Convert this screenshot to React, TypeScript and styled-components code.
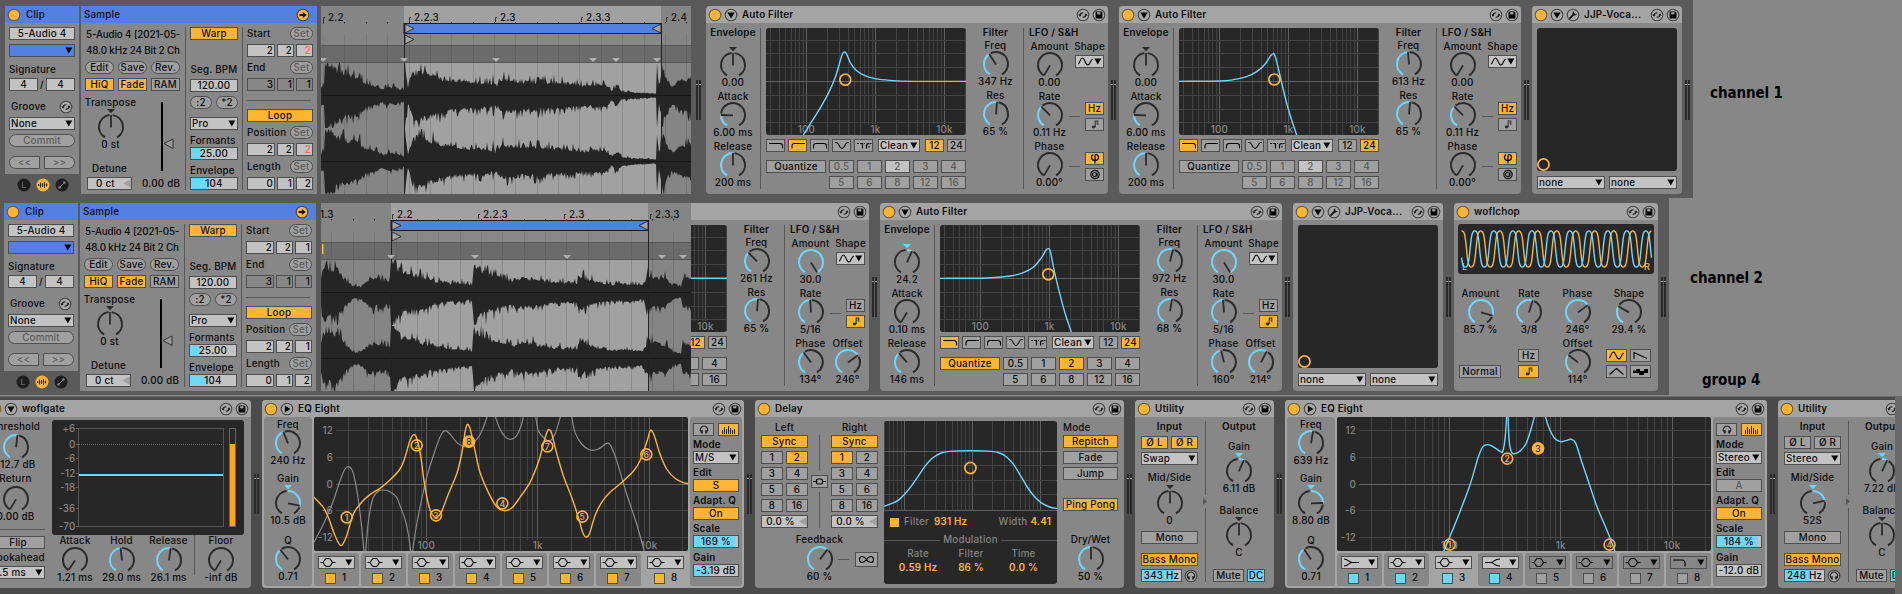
import React from "react";
import styled, { createGlobalStyle, css } from "styled-components";

const C = {
  panel: "#878787",
  head: "#a4a4a4",
  field: "#c3c3c3",
  btn: "#a0a0a0",
  line: "#4f4f4f",
  ink: "#0c0c0c",
  dim: "#5c5c5c",
  blue: "#5480e4",
  orange: "#ffb532",
  cyan: "#6dd7ff",
  dark: "#272727",
  mute: "#848484",
};

const Global = createGlobalStyle`
  body { margin: 0; background: #878787; }
  * { box-sizing: border-box; }
  svg { display: block; flex: none; }
  svg text { font-family: Inter, "Liberation Sans", sans-serif; font-weight: 500; letter-spacing: 0.2px; }
`;

const Page = styled.div`
  width: 1902px;
  height: 594px;
  overflow: hidden;
  background: #878787;
  color: ${C.ink};
  font: 500 9.8px/12px Inter, "Liberation Sans", sans-serif;
  letter-spacing: 0.22px;
  white-space: nowrap;
`;

const Track = styled.div`
  display: flex;
  height: 198px;
`;
const Strip = styled.div<{ $w: number; $left: number; $top: number; $deep?: boolean; $h?: number }>`
  display: flex;
  width: ${(p) => p.$w}px;
  height: ${(p) => p.$h ?? 197}px;
  padding: ${(p) => p.$top}px 0 0 ${(p) => p.$left}px;
  background: ${(p) => (p.$deep ? "#4b4b4b" : "#5a5a5a")};
  overflow: hidden;
  flex: none;
`;
const TrackName = styled.div<{ $x: number; $y: number }>`
  padding: ${(p) => p.$y}px 0 0 ${(p) => p.$x}px;
  font: bold 15px/20px "DejaVu Sans Condensed", "DejaVu Sans", sans-serif;
  font-stretch: condensed;
  letter-spacing: -0.1px;
  color: #000;
`;
const Chain = styled.div<{ $shift?: number; $w?: number }>`
  display: flex;
  width: ${(p) => (p.$w ? p.$w + "px" : "auto")};
  overflow: hidden;
  flex: none;
  & > :first-child { margin-left: ${(p) => p.$shift ?? 0}px; }
`;

const Row = styled.div<{ $mt?: number; $gap?: number; $h?: number; $just?: string; $ml?: number; $align?: string; $w?: number; $color?: string }>`
  display: flex;
  align-items: ${(p) => p.$align ?? "center"};
  justify-content: ${(p) => p.$just ?? "flex-start"};
  gap: ${(p) => p.$gap ?? 0}px;
  margin-top: ${(p) => p.$mt ?? 0}px;
  margin-left: ${(p) => p.$ml ?? 0}px;
  height: ${(p) => (p.$h ? p.$h + "px" : "auto")};
  width: ${(p) => (p.$w ? p.$w + "px" : "auto")};
  color: ${(p) => p.$color ?? "inherit"};
  flex: none;
`;
const Col = styled.div<{ $w?: number; $mt?: number; $ml?: number; $gap?: number; $align?: string }>`
  display: flex;
  flex-direction: column;
  flex: none;
  align-items: ${(p) => p.$align ?? "stretch"};
  gap: ${(p) => p.$gap ?? 0}px;
  width: ${(p) => (p.$w ? p.$w + "px" : "auto")};
  margin-top: ${(p) => p.$mt ?? 0}px;
  margin-left: ${(p) => p.$ml ?? 0}px;
`;
const Label = styled.div<{ $mt?: number; $c?: boolean; $b?: boolean; $ml?: number; $color?: string }>`
  height: 12px;
  flex: none;
  margin-top: ${(p) => p.$mt ?? 0}px;
  margin-left: ${(p) => p.$ml ?? 0}px;
  color: ${(p) => p.$color ?? "inherit"};
  ${(p) => p.$c && css`display: flex; justify-content: center;`}
  ${(p) => p.$b && css`font-weight: 600;`}
`;
const Button = styled.div<{ $w?: number; $on?: boolean | string; $dim?: boolean; $mt?: number; $ml?: number; $pill?: string; $h?: number; $bg?: string }>`
  display: flex;
  flex: none;
  align-items: center;
  justify-content: center;
  height: ${(p) => p.$h ?? 13}px;
  width: ${(p) => (p.$w ? p.$w + "px" : "auto")};
  margin-top: ${(p) => p.$mt ?? 0}px;
  margin-left: ${(p) => p.$ml ?? 0}px;
  border: 1px solid ${C.line};
  border-radius: ${(p) => p.$pill ?? "0"};
  line-height: 11px;
  background: ${(p) => p.$bg ?? (p.$on ? C.orange : C.btn)};
  color: ${(p) => (p.$dim ? C.dim : C.ink)};
`;
const Field = styled(Button)<{ $fill?: number; $right?: boolean; $left?: boolean; $red?: boolean; $off?: boolean }>`
  background: ${(p) =>
    p.$off
      ? C.panel
      : p.$fill
        ? `linear-gradient(90deg, ${C.cyan} ${p.$fill}%, ${C.field} ${p.$fill}%)`
        : C.field};
  ${(p) => p.$right && css`justify-content: flex-end; padding-right: 1px;`}
  ${(p) => p.$left && css`justify-content: flex-start; padding-left: 1px;`}
  ${(p) => p.$red && css`color: #ff6a5a;`}
`;
const SelectBox = styled(Button)<{ $tint?: string; $pad?: number }>`
  justify-content: space-between;
  padding: 0 1px 0 ${(p) => p.$pad ?? 1}px;
  background: ${(p) => p.$tint ?? C.field};
`;
const VLine = styled.div<{ $h: number; $mt?: number; $ml?: number }>`
  width: 1px;
  flex: none;
  height: ${(p) => p.$h}px;
  margin-top: ${(p) => p.$mt ?? 0}px;
  margin-left: ${(p) => p.$ml ?? 0}px;
  background: #575757;
`;
const HLine = styled.div<{ $w: number; $mt?: number }>`
  height: 1px;
  flex: none;
  width: ${(p) => p.$w}px;
  margin-top: ${(p) => p.$mt ?? 0}px;
  background: #575757;
`;
const Spring = styled.div`
  flex: 1;
`;

const Down = () => (
  <svg width="8" height="7" viewBox="0 0 8 7"><path d="M0.3 0.6H7.3L3.8 6.4Z" fill="#000" /></svg>
);
const Select = (p: { w?: number; mt?: number; ml?: number; tint?: string; pad?: number; children?: React.ReactNode }) => (
  <SelectBox $w={p.w} $mt={p.mt} $ml={p.ml} $tint={p.tint} $pad={p.pad}>
    <span>{p.children}</span>
    <Down />
  </SelectBox>
);

/* Round header icons */
const Round = (p: { fill?: string; stroke?: string; children?: React.ReactNode }) => (
  <svg width="14" height="14" viewBox="0 0 14 14">
    <circle cx="7" cy="7" r="5.8" fill={p.fill ?? "#a9a9a9"} stroke={p.stroke ?? "#434343"} strokeWidth="1.1" />
    {p.children}
  </svg>
);
const Power = () => <Round fill={C.orange} stroke="#6b5a3c" />;
const Fold = ({ right }: { right?: boolean }) => (
  <Round>{right ? <path d="M4.9 3.4V10.6L10.4 7Z" fill="#000" /> : <path d="M3.3 4.4H10.7L7 10.6Z" fill="#000" />}</Round>
);
const Wrench = () => (
  <Round>
    <path d="M4 10.2L7.5 6.6" stroke="#111" strokeWidth="1.8" strokeLinecap="round" />
    <path d="M8.4 3.2A2.2 2.2 0 1 0 10.8 5.8L9.3 6.2L8 4.8Z" fill="#111" />
  </Round>
);
const Swap = () => (
  <Round>
    <path d="M4 7.2C4 5.4 5 4.7 7.4 4.7M10 6.8C10 8.6 9 9.3 6.6 9.3" fill="none" stroke="#111" strokeWidth="1.1" />
    <path d="M2.3 6.6H5.7L4 8.7ZM8.3 7.4H11.7L10 5.3Z" fill="#111" />
  </Round>
);
const Save = () => (
  <Round>
    <path d="M3.6 3.6H9.4L10.4 4.6V10.4H3.6Z" fill="#000" />
    <rect x="5.2" y="4.2" width="3.2" height="2.2" fill="#a9a9a9" />
  </Round>
);
const ArrowRight = () => (
  <Round fill={C.orange}>
    <path d="M3.6 6.1H6.8V3.9L10.8 7L6.8 10.1V7.9H3.6Z" fill="#111" />
  </Round>
);
const Phones = ({ round }: { round?: boolean }) => {
  const shape = (
    <>
      <path d="M4.4 9.3A3.6 3.6 0 1 1 9.6 9.3" fill="none" stroke="#222" strokeWidth="1.1" />
      <rect x="3.9" y="7.3" width="1.9" height="3.2" fill="#222" />
      <rect x="8.2" y="7.3" width="1.9" height="3.2" fill="#222" />
    </>
  );
  return round ? <Round>{shape}</Round> : <svg width="14" height="14" viewBox="0 0 14 14">{shape}</svg>;
};

/* Knobs */
const arc = (a: number, b: number, r = 12) => {
  const p = (d: number) => {
    const t = (d * Math.PI) / 180;
    return `${(r * Math.sin(t)).toFixed(2)} ${(-r * Math.cos(t)).toFixed(2)}`;
  };
  return `M${p(a)}A${r} ${r} 0 ${b - a > 180 ? 1 : 0} 1 ${p(b)}`;
};
const Dial = ({ a, bi, tri }: { a: number; bi?: boolean; tri?: boolean }) => {
  const t = (a * Math.PI) / 180;
  const lit = bi ? (a > 4 ? [0, a] : null) : a > -146 ? [-150, a - 3] : null;
  const triCol = bi && a !== 0 ? C.cyan : "#2b2b2b";
  return (
    <svg width="28" height="24" viewBox="-14 -12 28 24" overflow="visible">
      {bi && a - 8 > -150 && <path d={arc(-150, Math.min(a, 0) - 7)} fill="none" stroke="#2b2b2b" strokeWidth="2" />}
      {a + 8 < 150 && <path d={arc(a + (a < -140 ? 0 : 8), 150)} fill="none" stroke="#2b2b2b" strokeWidth="2" />}
      {lit && <path d={arc(lit[0], lit[1])} fill="none" stroke={C.cyan} strokeWidth="2" />}
      <path d={`M0 0.4L${12 * Math.sin(t)} ${-12 * Math.cos(t)}`} stroke="#2b2b2b" strokeWidth="1.8" />
      {tri && <path d="M-4 -18H4L0 -13.8Z" fill={triCol} />}
    </svg>
  );
};
const KnobBox = styled(Col)`
  & > svg { align-self: center; }
`;
const Knob = (p: { label?: string; value: string; a: number; w?: number; mt?: number; ml?: number; gap?: number; bi?: boolean; bold?: boolean }) => (
  <KnobBox $w={p.w} $mt={p.mt} $ml={p.ml}>
    <Label $c $b={p.bold}>{p.label}</Label>
    <Col $mt={p.gap ?? 0} $align="center"><Dial a={p.a} bi={p.bi} tri={p.bi} /></Col>
    <Label $c>{p.value}</Label>
  </KnobBox>
);

/* Device frame */
const Frame = styled.div<{ $w: number; $bg?: string }>`
  width: ${(p) => p.$w}px;
  height: 188px;
  flex: none;
  overflow: hidden;
  border-radius: 4px;
  background: ${(p) => p.$bg ?? C.panel};
`;
const Head = styled.div<{ $bg?: string }>`
  display: flex;
  align-items: center;
  gap: 2px;
  height: 17px;
  padding: 0 2px;
  background: ${(p) => p.$bg ?? C.head};
`;
const Title = styled.div<{ $ml?: number; $b?: boolean }>`
  margin-left: ${(p) => p.$ml ?? 2}px;
  font-weight: ${(p) => (p.$b === false ? 500 : 600)};
  flex: 1;
`;
const Body = styled.div`
  display: flex;
  align-items: flex-start;
`;
const Device = (p: { w: number; title: string; icons?: React.ReactNode; bg?: string; children: React.ReactNode }) => (
  <Frame $w={p.w} $bg={p.bg}>
    <Head>
      <Power />
      {p.icons}
      <Title>{p.title}</Title>
      <Swap />
      <Save />
    </Head>
    <Body>{p.children}</Body>
  </Frame>
);

const MeterBox = styled.div<{ $l?: number; $r?: number }>`
  display: flex;
  flex: none;
  gap: 1px;
  height: 40px;
  margin: 74px ${(p) => p.$r ?? 3}px 0 ${(p) => p.$l ?? 3}px;
  & > i {
    width: 2px;
    background: linear-gradient(#2a2a2a 4px, #9a9a9a 4px, #9a9a9a 5px, #2a2a2a 5px);
  }
`;
const Meter = (p: { l?: number; r?: number }) => (
  <MeterBox $l={p.l} $r={p.r}><i /><i /></MeterBox>
);

/* Curves */
type P = [number, number];
const smooth = (pts: P[]) => {
  let d = `M${pts[0][0].toFixed(2)} ${pts[0][1].toFixed(2)}`;
  for (let i = 0; i < pts.length - 1; i++) {
    const a = pts[i - 1] ?? pts[i], b = pts[i], c = pts[i + 1], e = pts[i + 2] ?? c;
    const k = 6;
    d += `C${(b[0] + (c[0] - a[0]) / k).toFixed(2)} ${(b[1] + (c[1] - a[1]) / k).toFixed(2)} ${(c[0] - (e[0] - b[0]) / k).toFixed(2)} ${(c[1] - (e[1] - b[1]) / k).toFixed(2)} ${c[0].toFixed(2)} ${c[1].toFixed(2)}`;
  }
  return d;
};
const scaled = (s: string, ox: number, oy: number, sx = 3, sy = 3): P[] =>
  s.trim().split(" ").map((q) => {
    const [x, y] = q.split(",").map(Number);
    return [(x - ox) / sx, (y - oy) / sy];
  });

const Screen = styled.div<{ $w: number; $h: number; $mt?: number; $ml?: number; $r?: number }>`
  width: ${(p) => p.$w}px;
  height: ${(p) => p.$h}px;
  flex: none;
  margin-top: ${(p) => p.$mt ?? 0}px;
  margin-left: ${(p) => p.$ml ?? 0}px;
  border-radius: ${(p) => p.$r ?? 3}px;
  background: ${C.dark};
  overflow: hidden;
`;

const logLines = (x100: number, dec: number, w: number, min = 0) => {
  const out: { x: number; major: boolean }[] = [];
  for (let d = -1; d < 3; d++)
    for (let m = 1; m < 10; m++) {
      const x = x100 + dec * (d + Math.log10(m));
      if (x > min && x < w) out.push({ x, major: m === 1 });
    }
  return out;
};

/* Auto Filter */
const FILTER_ICONS = [
  "M1 3.5H12Q14.5 3.5 14.5 6V8.5",
  "M2 8.5V6Q2 3.5 4.5 3.5H15",
  "M1.5 8.5V6Q1.5 3.5 4 3.5H12Q14.5 3.5 14.5 6V8.5",
  "M1 2.5H2.5C5 2.5 5 8.5 8 8.5C11 8.5 11 2.5 13.5 2.5H15",
];
const FilterGlyph = ({ i }: { i: number }) => (
  <svg width="16" height="11" viewBox="0 0 16 11" fill="none" stroke="#000" strokeWidth="1.1">
    {i < 4 ? (
      <path d={FILTER_ICONS[i]} />
    ) : (
      <>
        <path d="M1 3.5H3M4 3.5H6.5V8.5M10.5 8.5V6Q10.5 3.5 12.5 3.5H13" />
        <path d="M13 3V9M8 3.5H9M14 3.5H16" strokeDasharray="1.5 1.5" />
      </>
    )}
  </svg>
);
const Note = () => (
  <svg width="12" height="11" viewBox="0 0 12 11">
    <ellipse cx="4.6" cy="8" rx="1.9" ry="1.4" fill="#333" />
    <path d="M6.2 8V2H8.8V6" stroke="#333" strokeWidth="1.1" fill="none" />
    <path d="M6.2 4H8.4" stroke="#555" strokeWidth="1" />
  </svg>
);
const Sine = () => (
  <svg width="17" height="11" viewBox="0 0 17 11">
    <path d="M1 8C3 8 3 2 5.3 2C8 2 8.2 9 11 9C13.3 9 13.3 3 16 3" fill="none" stroke="#000" strokeWidth="1.1" />
  </svg>
);
const Phi = () => (
  <svg width="12" height="11" viewBox="0 0 12 11" fill="none" stroke="#111" strokeWidth="1.3">
    <path d="M4.3 1.6C1.6 2.6 1.8 7.6 6 7.6C10.2 7.6 10.4 2.6 7.7 1.6C6.6 1.3 6 1.8 6 3V10.5" />
  </svg>
);
const Spin = () => (
  <svg width="12" height="11" viewBox="0 0 12 11" fill="none" stroke="#111" strokeWidth="1.2">
    <circle cx="6" cy="5.5" r="4.2" /><circle cx="5.5" cy="5.5" r="2" /><path d="M8 3.5V7.5" />
  </svg>
);
const Dash = ({ w = 11 }: { w?: number }) => <HLine $w={w} />;

const FilterScreen = ({ curve, node }: { curve: P[]; node?: P }) => (
  <svg width="200" height="107" viewBox="0 0 200 107">
    {logLines(40.5, 69, 200).map((l, i) => {
      const near = [40.5, 109.5, 178.5].some((c) => Math.abs(c - l.x) < 12);
      return <path key={i} d={`M${Math.floor(l.x) + 0.5} 0V${near ? 96 : 107}`} stroke={l.major ? "#5f5f5f" : "#424242"} />;
    })}
    {[12.5, 25.5, 39.5, 53.5, 67.5, 81.5, 94.5].map((y) => (
      <path key={y} d={`M0 ${y}H200`} stroke={y === 53.5 ? "#5f5f5f" : "#424242"} />
    ))}
    {["100", "1k", "10k"].map((t, i) => (
      <text key={t} x={40.5 + i * 69} y="104.5" fontSize="9.8" textAnchor="middle" fill={C.mute}>{t}</text>
    ))}
    <path d={smooth(curve)} fill="none" stroke={C.cyan} strokeWidth="1.4" />
    {node && <circle cx={node[0]} cy={node[1]} r="5.5" fill="none" stroke={C.orange} strokeWidth="1.7" />}
  </svg>
);

interface AFProps {
  env: [string, number];
  attack: [string, number];
  release: [string, number];
  curve: P[];
  node?: P;
  type: number;
  slope: number;
  quant: boolean;
  freq: [string, number];
  res: [string, number];
  amount: [string, number];
  rate: [string, number];
  phase: [string, number];
  offset?: [string, number];
}
const AutoFilter = (p: AFProps) => {
  const beat = (t: string, ml = 0) => (
    <Button key={t} $w={25} $ml={ml} $dim={!p.quant} $bg={t === "2" ? (p.quant ? C.orange : "#c3c3c3") : undefined}>{t}</Button>
  );
  return (
    <Device w={402} title="Auto Filter" icons={<Fold />}>
      <Col $w={54} $mt={4} $ml={0}>
        <Label $c $b>Envelope</Label>
        <Knob mt={2} value={p.env[0]} a={p.env[1]} bi />
        <Knob mt={2} label="Attack" value={p.attack[0]} a={p.attack[1]} />
        <Knob mt={2} label="Release" value={p.release[0]} a={p.release[1]} />
      </Col>
      <VLine $h={161} $mt={5} />
      <Col $w={200} $ml={5}>
        <Screen $w={200} $h={107} $mt={5}><FilterScreen curve={p.curve} node={p.node} /></Screen>
        <Row $mt={4} $gap={3}>
          {[0, 1, 2, 3, 4].map((i) => (
            <Button key={i} $w={19} $on={i === p.type}><FilterGlyph i={i} /></Button>
          ))}
          <Select w={42} ml={2}>Clean</Select>
          <Button $w={19} $ml={2} $on={p.slope === 12}>12</Button>
          <Button $w={19} $on={p.slope === 24}>24</Button>
        </Row>
        <Row $mt={8} $gap={3}>
          <Button $w={60} $on={p.quant}>Quantize</Button>
          {["0.5", "1", "2", "3", "4"].map((t) => beat(t))}
        </Row>
        <Row $mt={3} $gap={3} $just="flex-end">{["5", "6", "8", "12", "16"].map((t) => beat(t))}</Row>
      </Col>
      <Col $w={57} $ml={1} $mt={4}>
        <Label $c $b>Filter</Label>
        <Knob mt={1} label="Freq" value={p.freq[0]} a={p.freq[1]} />
        <Knob mt={2} label="Res" value={p.res[0]} a={p.res[1]} />
      </Col>
      <VLine $h={161} $mt={5} $ml={-1} />
      <Col $mt={4}>
        <Label $b $ml={5}>LFO / S&amp;H</Label>
        <Row $mt={2} $align="flex-start">
          <Col $w={51}>
            <Knob label="Amount" value={p.amount[0]} a={p.amount[1]} />
            <Knob mt={2} label="Rate" value={p.rate[0]} a={p.rate[1]} />
            <Knob mt={2} label="Phase" value={p.phase[0]} a={p.phase[1]} />
          </Col>
          <Col $w={29}>
            <Label $c>Shape</Label>
            <SelectBox $w={29} $mt={2}><Sine /><Down /></SelectBox>
            <Row $mt={34} $ml={-6} $w={35} $just="space-between">
              <Dash />
              <Col $gap={3}>
                <Button $w={19} $on={!p.offset}>Hz</Button>
                <Button $w={19} $on={!!p.offset}><Note /></Button>
              </Col>
            </Row>
            {p.offset ? (
              <Knob mt={10} ml={-4} w={31} label="Offset" value={p.offset[0]} a={p.offset[1]} />
            ) : (
              <Row $mt={21} $ml={-6} $w={35} $just="space-between">
                <Dash />
                <Col $gap={3}>
                  <Button $w={19} $on><Phi /></Button>
                  <Button $w={19}><Spin /></Button>
                </Col>
              </Row>
            )}
          </Col>
        </Row>
      </Col>
    </Device>
  );
};

const curveHigh = scaled("190,405 215,365 240,325 265,280 285,235 297,195 305,168 310,158 315,156 320,162 332,190 350,212 375,227 405,236 450,241 520,244 600,244 678,244", 78, 84);
const curveLow = scaled("207,244 330,243 370,239 410,230 440,215 465,193 480,170 488,162 493,163 500,185 513,240 530,310 545,360 560,405", 207, 84);
const curveLow2 = scaled("840,241 980,240 1050,234 1090,224 1120,208 1145,178 1158,156 1165,152 1171,160 1182,215 1200,290 1215,345 1234,402", 840, 81);
const curveFlat: P[] = [[0, 53.3], [200, 53.3]];

const Vocal = () => (
  <Device w={150} title="JJP-Voca..." icons={<><Fold /><Wrench /></>}>
    <Col $w={140} $ml={5}>
      <Screen $w={140} $h={143} $mt={5}>
        <svg width="140" height="143"><circle cx="6.5" cy="136.5" r="5.6" fill="none" stroke={C.orange} strokeWidth="1.7" /></svg>
      </Screen>
      <Row $mt={5} $gap={4}>
        <Select w={68}>none</Select>
        <Select w={68}>none</Select>
      </Row>
    </Col>
  </Device>
);

/* Clip and sample panels */
const ClipFrame = styled.div`
  width: 74px;
  height: 168px;
  background: ${C.panel};
`;
const ClipBody = styled.div`
  padding: 4px;
`;
const SampleFrame = styled.div`
  width: 236px;
  height: 188px;
  margin-left: 2px;
  flex: none;
  background: ${C.panel};
`;
const Pill = styled(Button)`
  border-radius: 7px;
`;
const Clip = () => (
  <Col $w={74}>
    <ClipFrame>
      <Head $bg={C.blue}><Power /><Title $b={false} $ml={3}>Clip</Title></Head>
      <ClipBody>
        <Field $w={66}>5-Audio 4</Field>
        <Select w={66} mt={4} tint={C.blue} />
        <Label $mt={7}>Signature</Label>
        <Row $mt={2} $just="space-between"><Field $w={29}>4</Field>/<Field $w={29}>4</Field></Row>
        <Row $mt={9} $h={14} $just="space-between"><Label $ml={2}>Groove</Label><Row $w={16}><Swap /></Row></Row>
        <Select w={66} mt={3}>None</Select>
        <Pill $w={66} $mt={4} $dim>Commit</Pill>
        <Row $mt={9} $gap={4}>
          <Button $w={31} $dim $pill="7px 0 0 7px">&lt;&lt;</Button>
          <Button $w={31} $dim $pill="0 7px 7px 0">&gt;&gt;</Button>
        </Row>
      </ClipBody>
    </ClipFrame>
    <Row $mt={4} $ml={12} $gap={5}>
      <svg width="14" height="14" viewBox="0 0 14 14"><circle cx="7" cy="7" r="6.5" fill="#1e1e1e" /><path d="M5.5 4V9.5H9" fill="none" stroke="#5a5a5a" strokeWidth="1.2" /></svg>
      <svg width="14" height="14" viewBox="0 0 14 14"><circle cx="7" cy="7" r="6.5" fill={C.orange} /><path d="M2.5 6V8M4.5 4.5V9.5M6.5 5V9M8.5 4V10M10.5 5.5V8.5" stroke="#3a2c10" strokeWidth="1" /><path d="M2 7H12" stroke="#3a2c10" strokeWidth="0.5" /></svg>
      <svg width="14" height="14" viewBox="0 0 14 14"><circle cx="7" cy="7" r="6.5" fill="#1e1e1e" /><path d="M4.8 9.2L9.2 4.8" stroke="#777" strokeWidth="1" /><circle cx="4.6" cy="9.4" r="1.4" fill="#777" /><circle cx="9.4" cy="4.6" r="1.4" fill="#777" /></svg>
    </Row>
  </Col>
);
const SetRow = ({ t, mt }: { t: string; mt: number }) => (
  <Row $mt={mt} $just="space-between"><Label>{t}</Label><Pill $w={23} $dim>Set</Pill></Row>
);
const Beats = ({ v, off, red }: { v: string[]; off?: boolean; red?: boolean }) => (
  <Row $mt={4} $gap={2}>
    <Field $w={28} $right $off={off}>{v[0]}</Field>
    <Field $w={17} $right $off={off}>{v[1]}</Field>
    <Field $w={17} $right $off={off} $red={red}>{v[2]}</Field>
  </Row>
);
const Info = styled(Label)`
  padding-left: 1px;
  letter-spacing: -0.13px;
`;
const Sample = ({ last, red }: { last: string; red?: boolean }) => (
  <SampleFrame>
    <Head $bg={C.blue}><Title $b={false} $ml={1}>Sample</Title><Row $w={19}><ArrowRight /></Row></Head>
    <Body>
      <Col $w={95} $ml={4}>
        <Info $mt={6}>5-Audio 4 [2021-05-</Info>
        <Info $mt={4}>48.0 kHz 24 Bit 2 Ch</Info>
        <Row $mt={4} $just="space-between"><Pill $w={29}>Edit</Pill><Pill $w={29}>Save</Pill><Pill $w={29}>Rev.</Pill></Row>
        <Row $mt={4} $just="space-between"><Button $w={29} $on>HiQ</Button><Button $w={29} $on>Fade</Button><Button $w={29}>RAM</Button></Row>
        <Row $mt={6} $align="flex-start">
          <Knob w={51} label="Transpose" value="0 st" a={0} bi gap={6} />
          <Row $ml={25} $mt={5}>
            <svg width="14" height="69"><rect width="2" height="69" fill="#000" /><path d="M3 41.5L12 37V46.5Z" fill="#9a9a9a" stroke="#333" strokeWidth="1" /></svg>
          </Row>
        </Row>
        <Label $ml={7} $mt={-8}>Detune</Label>
        <Row $mt={2} $ml={2} $gap={10}>
          <Field $w={45} $bg={C.field}>
            <Spring /><span>0 ct</span><Spring />
            <svg width="8" height="9"><path d="M8 0V9L0 4.5Z" fill="#a2a2a2" /></svg>
          </Field>
          <span>0.00 dB</span>
        </Row>
      </Col>
      <VLine $h={163} $mt={4} $ml={5} />
      <Col $w={48} $ml={4} $mt={4}>
        <Button $on>Warp</Button>
        <Label $c $mt={24}>Seg. BPM</Label>
        <Field $mt={3}>120.00</Field>
        <Row $mt={4} $just="space-between"><Pill $w={22}>:2</Pill><Pill $w={22}>*2</Pill></Row>
        <Select mt={8}>Pro</Select>
        <Label $mt={5}>Formants</Label>
        <Field $fill={22}>25.00</Field>
        <Label $mt={5}>Envelope</Label>
        <Field $fill={40}>104</Field>
      </Col>
      <VLine $h={163} $mt={4} $ml={4} />
      <Col $w={66} $ml={4} $mt={4}>
        <SetRow t="Start" mt={0} />
        <Beats v={["2", "2", last]} red={red} />
        <SetRow t="End" mt={4} />
        <Beats v={["3", "1", "1"]} off />
        <HLine $w={64} $mt={9} />
        <Button $on $mt={8}>Loop</Button>
        <SetRow t="Position" mt={4} />
        <Beats v={["2", "2", last]} red={red} />
        <SetRow t="Length" mt={4} />
        <Beats v={["0", "1", "2"]} />
      </Col>
    </Body>
  </SampleFrame>
);

/* Waveform view */
const WaveFrame = styled.div`
  margin-left: 4px;
  width: 370px;
  height: 188px;
  flex: none;
`;
const rng = (seed: number) => () => {
  seed = (seed * 16807) % 2147483647;
  return seed / 2147483647;
};
const wavePath = (env: P[], cy: number, seed: number, skew: number) => {
  const r = rng(seed);
  const at = (x: number) => {
    for (let i = 1; i < env.length; i++)
      if (x <= env[i][0]) {
        const [a, b] = [env[i - 1], env[i]];
        return a[1] + ((b[1] - a[1]) * (x - a[0])) / (b[0] - a[0] || 1);
      }
    return env[env.length - 1][1];
  };
  const top: string[] = [], bot: string[] = [];
  const jitter = () => {
    const v = r();
    return 0.58 + 0.22 * r() + (v > 0.78 ? 0.15 + 0.2 * r() : 0);
  };
  for (let x = 0; x <= 370; x += 1) {
    const e = at(x);
    top.push(`${x} ${(cy - Math.min(32.5, e * jitter() * skew)).toFixed(1)}`);
    bot.unshift(`${x} ${(cy + Math.min(32.5, e * jitter() * (2 - skew))).toFixed(1)}`);
  }
  return `M${top.join("L")}L${bot.join("L")}Z`;
};
const Waves = (p: { env: P[]; from: number; to: number; ticks: [number, string][]; flags: number[]; seed: number; marker?: boolean }) => {
  const step = 21.37;
  const grid: number[] = [];
  for (let x = (p.from + 5) % step; x < 370; x += step) grid.push(Math.floor(x) + 0.5);
  return (
    <WaveFrame>
      <svg width="370" height="188">
        <rect width="370" height="188" fill="#858585" />
        <rect x={p.from} width={p.to - p.from} height="188" fill="#a1a1a1" />
        <rect x={p.from} y="28" width={p.to - p.from} height="12" fill="#888" />
        <rect y="39" width="370" height="18" fill="#6b6b6b" />
        <path d="M0 39.5H370M0 56.5H370" stroke="#575757" />
        {grid.map((x) => (
          <g key={x}>
            <path d={`M${x} 57V188`} stroke="#000" opacity="0.12" />
            <path d={`M${x} 28V57`} stroke="#000" opacity="0.08" />
            <rect x={x - 0.5} y="16" width="1" height="1.5" fill="#222" />
          </g>
        ))}
        {p.marker && <rect x="1" y="41" width="1.5" height="10" fill={C.orange} />}
        <rect x={p.from} y="17.5" width={p.to - p.from} height="10" fill={C.blue} stroke="#1c1c1c" />
        {p.ticks.map(([x, t]) => (
          <g key={t}>
            <path d={`M${x + 0.5} 16V11.5H${x + 2}`} stroke="#333" fill="none" />
            <text x={x + 5} y="15" fontSize="9.8" fill="#111">{t}</text>
          </g>
        ))}
        <path d={wavePath(p.env, 89.5, p.seed, 0.98)} fill="#252525" />
        <path d={wavePath(p.env, 155.5, p.seed + 77, 1)} fill="#252525" />
        <path d="M0 89.5H370M0 155.5H370" stroke="#111" opacity="0.6" />
        <path d={`M${p.from + 0.5} 17V188M${p.to + 0.5} 17V188`} stroke="#222" />
        <path d={`M${p.from + 1} 18L${p.from + 10} 22.5L${p.from + 1} 27ZM${p.from + 1} 29L${p.from + 10} 33.5L${p.from + 1} 38ZM${p.to} 18L${p.to - 9} 22.5L${p.to} 27Z`} fill="#a4a4a4" stroke="#222" strokeWidth="0.9" />
        {p.flags.map((x) => (
          <path key={x} d={`M${x - 4} 52H${x + 4}L${x} 56Z`} fill="#b0b0b0" />
        ))}
      </svg>
    </WaveFrame>
  );
};
const env1: P[] = [[0, 12], [3, 14], [4, 50], [12, 42], [22, 33], [32, 29], [38, 27], [44, 19], [56, 13], [62, 9], [66, 12], [74, 12], [82, 8], [83, 6], [83.5, 50], [85, 32], [87, 10], [92, 33], [100, 35], [108, 31], [120, 25], [140, 20], [168, 18], [171, 16], [172, 30], [174, 13], [182, 24], [200, 21], [216, 21], [217, 30], [220, 20], [240, 19], [262, 15], [276, 17], [286, 14], [291, 6], [295, 14], [301, 6], [312, 4.5], [335, 3], [336, 45], [338, 12], [340, 28], [342, 38], [345, 26], [352, 12], [360, 22], [370, 26]];
const env2: P[] = [[0, 20], [3, 38], [16, 34], [24, 19], [32, 9], [40, 9], [48, 20], [60, 20], [69, 18], [70, 55], [76, 36], [84, 30], [100, 23], [115, 17], [130, 14], [151, 11], [153, 45], [158, 34], [170, 27], [190, 18], [200, 22], [215, 20], [230, 16], [256, 14], [258, 24], [275, 16], [290, 12], [305, 13], [316, 11], [322, 10], [327, 26], [332, 22], [345, 20], [352, 10], [360, 7], [362, 22], [370, 20]];

/* woflchop */
const Chop = () => {
  const osc = (ph: number) => {
    const pts: string[] = [];
    for (let x = 0; x <= 190; x += 0.5) {
      const s = Math.sin(((x - ph) / 19) * 2 * Math.PI);
      pts.push(`${(x + 3.5).toFixed(1)} ${(25 - 18 * Math.tanh(s * 1.6) / Math.tanh(1.6)).toFixed(2)}`);
    }
    return "M" + pts.join("L");
  };
  return (
    <Device w={204} title="woflchop">
      <Col>
        <Screen $w={196} $h={50} $mt={4} $ml={4}>
          <svg width="196" height="50">
            <path d={osc(14.5)} fill="none" stroke={C.orange} strokeWidth="1.4" />
            <path d={osc(8.6)} fill="none" stroke={C.cyan} strokeWidth="1.4" />
            <text x="4" y="46" fontSize="9" fill={C.cyan}>L</text>
            <text x="186" y="46" fontSize="9" fill={C.orange}>R</text>
          </svg>
        </Screen>
        <Row $mt={14} $ml={2} $align="flex-start">
          <Col $w={49}>
            <Knob label="Amount" value="85.7 %" a={107} />
            <Button $w={42} $ml={3} $mt={29}>Normal</Button>
          </Col>
          <Col $w={48}>
            <Knob label="Rate" value="3/8" a={18} />
            <Button $w={21} $ml={13} $mt={13}>Hz</Button>
            <Button $w={21} $ml={13} $mt={3} $on><Note /></Button>
          </Col>
          <Col $w={49}>
            <Knob label="Phase" value="246°" a={55} />
            <Knob mt={2} label="Offset" value="114°" a={-54} />
          </Col>
          <Col $w={54}>
            <Knob label="Shape" value="29.4 %" a={-62} />
            <Row $mt={13} $ml={4} $gap={3}>
              <Button $w={21} $on><Sine /></Button>
              <Button $w={21}><svg width="17" height="11"><path d="M2 9V2.5L15 8.5" fill="none" stroke="#000" strokeWidth="1.1" /></svg></Button>
            </Row>
            <Row $mt={3} $ml={4} $gap={3}>
              <Button $w={21}><svg width="17" height="11"><path d="M1.5 8.5L8.5 2.5L15.5 8.5" fill="none" stroke="#000" strokeWidth="1.1" /></svg></Button>
              <Button $w={21}><svg width="17" height="11"><path d="M1 4.5H4V3H8V5H12V3H16V7H12V9H7V7H1Z" fill="#000" /></svg></Button>
            </Row>
          </Col>
        </Row>
      </Col>
    </Device>
  );
};

/* woflgate */
const Gate = () => (
  <Device w={265} title="woflgate" icons={<Fold />}>
    <Col $ml={5} $w={54} $mt={4}>
      <Knob w={49} gap={2} label="Threshold" value="-12.7 dB" a={7} />
      <Knob w={49} mt={2} gap={2} label="Return" value="0.00 dB" a={-150} />
      <HLine $w={54} $mt={6} />
      <Button $w={54} $mt={6}>Flip</Button>
      <Label $c $mt={3}>Lookahead</Label>
      <Select w={54} mt={2} pad={3}>1.5 ms</Select>
    </Col>
    <Col $ml={7} $w={194}>
      <Screen $w={192} $h={115} $mt={3}>
        <svg width="192" height="115">
          <rect x="26.5" y="8.5" width="145" height="98" fill="none" stroke="#555" />
          <path d="M27 24.5H171" stroke="#666" strokeDasharray="1 1" />
          {([["+6", 8.5], ["0", 24.5], ["-6", 38.5], ["-12", 53.5], ["-18", 67.5], ["-36", 88.5], ["-70", 106.5]] as [string, number][]).map(([t, y]) => (
            <g key={t}>
              <path d={`M24 ${y}H27`} stroke="#666" />
              <text x="23.5" y={y + 3.5} fontSize="9.8" textAnchor="end" fill={C.mute}>{t}</text>
            </g>
          ))}
          <path d="M27 55H171" stroke={C.cyan} strokeWidth="2" />
          <rect x="177.5" y="8.5" width="6" height="98" fill="none" stroke="#666" />
          <rect x="178" y="24" width="5" height="82" fill="#ffa31f" />
        </svg>
      </Screen>
      <Row $align="flex-start">
        <Knob w={46} gap={1} label="Attack" value="1.21 ms" a={-147} />
        <Knob w={47} gap={1} label="Hold" value="29.0 ms" a={-7} />
        <Knob w={47} gap={1} label="Release" value="26.1 ms" a={8} />
        <VLine $h={40} $ml={2} />
        <Knob w={52} gap={1} label="Floor" value="-inf dB" a={-150} />
      </Row>
    </Col>
  </Device>
);

/* EQ Eight */
const EqPanel = styled(Col)<{ $pt?: number; $px?: number }>`
  height: 169px;
  background: ${C.panel};
  border-radius: 3px;
  padding: ${(p) => p.$pt ?? 0}px ${(p) => p.$px ?? 0}px 0;
`;
const Band = styled.div<{ $plain?: boolean }>`
  width: 45px;
  height: 33px;
  padding: 3px 4px 0;
  border-radius: 3px;
  background: ${(p) => (p.$plain ? "transparent" : C.panel)};
`;
const Chip = styled.div<{ $bg: string; $s?: number }>`
  width: ${(p) => p.$s ?? 11}px;
  height: ${(p) => p.$s ?? 11}px;
  border: ${(p) => (p.$s ? "none" : `1px solid ${C.line}`)};
  background: ${(p) => p.$bg};
`;
const shapes: Record<string, string> = {
  bell: "M0.5 5.5H3L5 2.5Q5.6 1.5 7 1.5H8.5Q10 1.5 10.6 2.5L12.5 5.5H15.5M3 5.5L5 8.5Q5.6 9.5 7 9.5H8.5Q10 9.5 10.6 8.5L12.5 5.5",
  lowShelf: "M1 2C5 2 6 5.5 9 5.5H16M1 9C5 9 6 5.5 9 5.5",
  highShelf: "M1 5.5H7C10 5.5 10 2 16 2M7 5.5C10 5.5 10 9 16 9",
  cut: "M1 3H10Q13 3 13 6V9.5",
};
interface EqNode { n: string; x: number; y: number; full?: boolean }
interface EqProps {
  freq: [string, number]; gain: [string, number]; q: [string, number];
  back?: string[]; curves: string[]; color: string; sx: number; ox: number;
  nodes: EqNode[]; bands: string[]; onCount: number; plain: number;
  mode: string; edit: string; editOn: boolean; scale: string; fill: number; out: string; outFill: number;
}
const EqEight = (p: EqProps) => (
  <Device w={482} title="EQ Eight" icons={<Fold right />} bg={C.head}>
    <EqPanel $w={48} $ml={2} $pt={2}>
      <Knob label="Freq" value={p.freq[0]} a={p.freq[1]} />
      <Knob mt={6} gap={6} label="Gain" value={p.gain[0]} a={p.gain[1]} bi />
      <Knob mt={8} label="Q" value={p.q[0]} a={p.q[1]} />
    </EqPanel>
    <Col $w={374} $ml={2}>
      <Screen $w={374} $h={134} $r={2}>
        <svg width="374" height="134">
          {logLines(112.5, 111.3, 374, 30).map((l, i) => {
            const near = [112.5, 223.8, 335.1].some((c) => Math.abs(c - l.x) < 14);
            return <path key={i} d={`M${Math.floor(l.x) + 0.5} 0V${near ? 123 : 134}`} stroke={l.major ? "#5f5f5f" : "#424242"} />;
          })}
          {[13.5, 40.5, 67.5, 93.5, 120.5].map((y) => (
            <path key={y} d={`M22 ${y}H374`} stroke={y === 67.5 ? "#666" : "#424242"} />
          ))}
          {["12", "6", "0", "-6", "-12"].map((t, i) => (
            <text key={t} x="19" y={17 + i * 26.8} fontSize="9.8" textAnchor="end" fill={C.mute}>{t}</text>
          ))}
          {["100", "1k", "10k"].map((t, i) => (
            <text key={t} x={112.5 + i * 111.3} y="132" fontSize="9.8" textAnchor="middle" fill={C.mute}>{t}</text>
          ))}
          {p.back?.map((s, i) => <path key={i} d={smooth(scaled(s, p.ox, 69, p.sx))} fill="none" stroke="#8a8a8a" strokeWidth="1.2" />)}
          {p.curves.map((s, i) => <path key={i} d={smooth(scaled(s, p.ox, 69, p.sx))} fill="none" stroke={p.color} strokeWidth="1.4" />)}
          {p.nodes.map((n) => {
            const [[x, y]] = scaled(`${n.x},${n.y}`, p.ox, 69, p.sx);
            return (
              <g key={n.n}>
                <circle cx={x} cy={y} r="5.5" fill={n.full ? C.orange : "none"} stroke={C.orange} strokeWidth="1.6" />
                <text x={x} y={y + 3.2} fontSize="8.5" textAnchor="middle" fill={n.full ? "#222" : C.orange}>{n.n}</text>
              </g>
            );
          })}
        </svg>
      </Screen>
      <Row $mt={2} $gap={2}>
        {p.bands.map((b, i) => {
          const on = i < p.onCount;
          return (
            <Band key={i} $plain={i === p.plain}>
              <Select w={37} tint={on ? C.field : C.panel}>
                <svg width="17" height="11" viewBox="0 0 17 11"><path d={shapes[b]} fill="none" stroke="#000" strokeWidth="1.1" /></svg>
              </Select>
              <Row $mt={3} $ml={7} $gap={6} $h={12}><Chip $bg={on ? p.color : C.btn} />{i + 1}</Row>
            </Band>
          );
        })}
      </Row>
    </Col>
    <EqPanel $w={52} $ml={2} $pt={6} $px={3}>
      <Row $just="space-between">
        <Button $w={21}><Phones /></Button>
        <Button $w={21} $on><svg width="15" height="9"><path d="M1.5 9V5M3.5 9V2M5.5 9V4M7.5 9V1M9.5 9V3M11.5 9V5M13.5 9V4" stroke="#222" strokeWidth="1" /></svg></Button>
      </Row>
      <Label $b $mt={3}>Mode</Label>
      <Select>{p.mode}</Select>
      <Label $b $mt={3}>Edit</Label>
      <Button $on={p.editOn} $dim={!p.editOn}>{p.edit}</Button>
      <Label $b $mt={3}>Adapt. Q</Label>
      <Button $on>On</Button>
      <Label $b $mt={3}>Scale</Label>
      <Field $fill={p.fill}>{p.scale}</Field>
      <Label $b $mt={4}>Gain</Label>
      <Field $fill={p.outFill}>{p.out}</Field>
    </EqPanel>
  </Device>
);
const bells = Array(8).fill("bell") as string[];

/* Delay */
const DelaySide = ({ t, on }: { t: string; on: string }) => (
  <Col $w={47}>
    <Label $c>{t}</Label>
    <Button $on $mt={1}>Sync</Button>
    {[["1", "2"], ["3", "4"], ["5", "6"], ["8", "16"]].map((r) => (
      <Row key={r[0]} $mt={3} $just="space-between">
        {r.map((v) => <Button key={v} $w={22} $on={v === on}>{v}</Button>)}
      </Row>
    ))}
    <Field $mt={3}>
      <Spring /><span>0.0 %</span><Spring />
      <svg width="8" height="9"><path d="M8 0V9L0 4.5Z" fill="#a2a2a2" /></svg>
    </Field>
  </Col>
);
const Trio = styled.div`
  display: grid;
  grid-template-columns: 58px 48px 1fr;
  padding: 0 5px;
  height: 14px;
  line-height: 14px;
  text-align: center;
  color: ${C.mute};
  & + & { color: ${C.orange}; font-weight: 600; }
`;
const FeedbackRow = styled.div`
  display: grid;
  grid-template-columns: 34px 49px 34px;
  align-items: start;
  margin-top: 6px;
`;
const Amber = styled.span`
  color: ${C.orange};
  font-weight: 600;
`;
const ReadOut = styled(Row)`
  padding: 0 6px;
  height: 22px;
  color: ${C.mute};
`;
const Delay = () => (
  <Device w={369} title="Delay">
    <Col $w={117} $ml={6} $mt={5}>
      <Row $align="flex-start">
        <DelaySide t="Left" on="2" />
        <Col $w={23} $align="center" $mt={13}>
          <VLine $h={36} />
          <Button $w={17} $mt={4}>
            <svg width="13" height="9"><rect x="3.5" y="2" width="6" height="5" rx="1.5" fill="none" stroke="#000" strokeWidth="1.2" /><path d="M0 4.5H4M9 4.5H13" stroke="#000" strokeWidth="1.2" /></svg>
          </Button>
          <VLine $h={36} $mt={4} />
        </Col>
        <DelaySide t="Right" on="1" />
      </Row>
      <FeedbackRow>
        <i />
        <Knob gap={1} label="Feedback" value="60 %" a={38} />
        <Row $mt={18} $just="space-between" $ml={-6}>
          <Dash w={11} />
          <Button $w={23} $h={15}>
            <svg width="17" height="9"><path d="M8.5 4.5C6 0.5 1.5 0.5 1.5 4.5C1.5 8.5 6 8.5 8.5 4.5C11 0.5 15.5 0.5 15.5 4.5C15.5 8.5 11 8.5 8.5 4.5Z" fill="none" stroke="#000" strokeWidth="1.2" /></svg>
          </Button>
        </Row>
      </FeedbackRow>
    </Col>
    <Screen $w={173} $h={163} $mt={4} $ml={6}>
      <svg width="173" height="90">
        {logLines(20.5, 68, 173).map((l, i) => <path key={i} d={`M${Math.floor(l.x) + 0.5} 0V89`} stroke={l.major ? "#5f5f5f" : "#424242"} />)}
        {[30.5, 44.5, 59.5, 73.5, 89.5].map((y) => <path key={y} d={`M0 ${y}H173`} stroke={y === 30.5 || y === 89.5 ? "#5f5f5f" : "#424242"} />)}
        <path d={smooth(scaled("388,338 410,330 430,320 450,300 470,275 490,245 510,215 530,193 555,178 580,173 640,171 700,173 725,178 745,190 765,212 785,245 805,280 825,308 845,327 870,340 893,345", 389, 82, 2.904))} fill="none" stroke={C.cyan} strokeWidth="1.4" />
        <circle cx="86.4" cy="47" r="5.6" fill="none" stroke={C.orange} strokeWidth="1.7" />
      </svg>
      <ReadOut>
        <Chip $bg={C.orange} $s={9} />
        <Row $ml={5} $gap={5}><span>Filter</span><Amber>931 Hz</Amber></Row>
        <Spring />
        <Row $gap={3}><span>Width</span><Amber>4.41</Amber></Row>
      </ReadOut>
      <Row $just="center" $gap={3} $h={14} $color={C.mute}><HLine $w={57} />Modulation<HLine $w={57} /></Row>
      <Trio><span>Rate</span><span>Filter</span><span>Time</span></Trio>
      <Trio><span>0.59 Hz</span><span>86 %</span><span>0.0 %</span></Trio>
    </Screen>
    <Col $w={55} $ml={6} $mt={5}>
      <Label>Mode</Label>
      <Button $on $mt={1}>Repitch</Button>
      <Button $mt={3}>Fade</Button>
      <Button $mt={3}>Jump</Button>
      <Button $on $mt={18}>Ping Pong</Button>
      <Knob mt={23} gap={1} label="Dry/Wet" value="50 %" a={0} />
    </Col>
  </Device>
);

/* Utility */
const Utility = (p: { inv: boolean; sel: string; ms: [string, number]; hz: string; fill: number; gain: [string, number] }) => (
  <Device w={139} title="Utility">
    <Col $w={57} $ml={6} $mt={4}>
      <Label $c $b>Input</Label>
      <Row $mt={3} $just="space-between"><Button $w={27} $on={p.inv}>Ø L</Button><Button $w={27} $on={p.inv}>Ø R</Button></Row>
      <Select mt={3}>{p.sel}</Select>
      <Knob mt={7} gap={7} label="Mid/Side" value={p.ms[0]} a={p.ms[1]} bi />
      <Button $mt={4}>Mono</Button>
      <Button $mt={9} $on>Bass Mono</Button>
      <Row $mt={3} $h={13} $just="space-between"><Field $w={41} $fill={p.fill}>{p.hz}</Field><Phones round /></Row>
    </Col>
    <Col $w={6} $ml={4} $mt={4} $align="center">
      <VLine $h={74} />
      <Row $mt={3}><svg width="4" height="7"><path d="M0 0L4 3.5L0 7Z" fill="#575757" /></svg></Row>
      <VLine $h={74} $mt={3} />
    </Col>
    <Col $w={62} $mt={4}>
      <Label $c $b>Output</Label>
      <Knob mt={8} gap={6} label="Gain" value={p.gain[0]} a={p.gain[1]} bi />
      <Knob mt={10} gap={6} label="Balance" value="C" a={0} bi />
      <Row $mt={10} $gap={3} $ml={5}><Button $w={31}>Mute</Button><Button $w={18} $bg={C.cyan}>DC</Button></Row>
    </Col>
  </Device>
);

const Bottom = styled.div`
  display: flex;
  height: 199px;
  border-top: 1px solid #6c6c6c;
  background: #6a6a6a;
`;

export default function App() {
  return (
    <Page>
      <Global />
      <Track>
        <Strip $w={1693} $left={5} $top={6} $h={198}>
          <Clip />
          <Sample last="2" red />
          <Waves
            env={env1} from={83} to={340} seed={4211}
            ticks={[[2, "2.2"], [88, "2.2.3"], [174, "2.3"], [260, "2.3.3"], [345, "2.4"]]}
            flags={[2, 83, 175, 272, 295, 336]}
          />
          <Meter l={5} r={5} />
          <AutoFilter
            env={["0.00", 0]} attack={["6.00 ms", -90]} release={["200 ms", 0]} curve={curveHigh} node={[79.3, 51.7]}
            type={1} slope={12} quant={false} freq={["347 Hz", -34]} res={["65 %", 5]} amount={["0.00", -150]} rate={["0.11 Hz", -46]} phase={["0.00°", -150]}
          />
          <Meter />
          <AutoFilter
            env={["0.00", 0]} attack={["6.00 ms", -90]} release={["200 ms", 0]} curve={curveLow} node={[95.3, 51.5]}
            type={0} slope={24} quant={false} freq={["613 Hz", -5]} res={["65 %", 5]} amount={["0.00", -150]} rate={["0.11 Hz", -46]} phase={["0.00°", -150]}
          />
          <Meter />
          <Vocal />
          <Meter />
        </Strip>
        <TrackName $x={17} $y={83}>channel 1</TrackName>
      </Track>
      <Track>
        <Strip $w={1669} $left={4} $top={5}>
          <Clip />
          <Sample last="1" />
          <Chain $w={1}><i /></Chain>
          <Waves
            env={env2} from={70} to={327} seed={977} marker
            ticks={[[-6, "1.3"], [71, "2.2"], [157, "2.2.3"], [243, "2.3"], [329, "2.3.3"]]}
            flags={[70, 154, 246, 341, 362]}
          />
          <Chain $shift={-224}>
            <AutoFilter
              env={["24.2", 25]} attack={["0.10 ms", -150]} release={["146 ms", -42]} curve={curveFlat}
              type={1} slope={12} quant freq={["261 Hz", -46]} res={["65 %", 5]} amount={["30.0", 150]} rate={["5/16", -4]} phase={["134°", -38]} offset={["246°", 56]}
            />
            <Meter />
            <AutoFilter
              env={["24.2", 25]} attack={["0.10 ms", -150]} release={["146 ms", -42]} curve={curveLow2} node={[108.3, 49.3]}
              type={0} slope={24} quant freq={["972 Hz", 15]} res={["68 %", 10]} amount={["30.0", 150]} rate={["5/16", -4]} phase={["160°", -14]} offset={["214°", 28]}
            />
            <Meter />
            <Vocal />
            <Meter />
            <Chop />
            <Meter />
          </Chain>
        </Strip>
        <Col>
          <TrackName $x={21} $y={70}>channel 2</TrackName>
          <TrackName $x={33} $y={82}>group 4</TrackName>
        </Col>
      </Track>
      <Bottom>
        <Strip $w={1895} $left={0} $top={3} $deep>
          <Chain $shift={-14}>
            <Gate />
            <Meter />
            <EqEight
              freq={["240 Hz", -23]} gain={["10.5 dB", 103]} q={["0.71", -40]} color={C.orange} sx={3} ox={942}
              back={[
                "942,445 975,380 1000,320 1020,260 1035,225 1046,218 1058,232 1068,275 1078,340 1085,400 1092,472",
                "1097,472 1103,400 1110,350 1120,310 1135,292 1150,288 1170,293 1190,310 1200,335 1215,375 1225,420 1232,472",
                "1238,472 1245,420 1260,340 1280,250 1305,170 1322,125 1335,110 1350,120 1370,145 1390,157 1410,155 1435,130 1450,100 1462,66",
                "1485,66 1500,105 1515,128 1532,136 1550,125 1565,90 1570,66",
                "1607,66 1615,110 1635,135 1650,140 1665,120 1682,66",
                "1715,66 1725,115 1745,150 1770,168 1795,165 1820,148 1832,155 1850,200 1880,300 1910,390 1933,472",
              ]}
              curves={["942,310 970,340 985,370 1005,425 1023,455 1040,425 1060,360 1085,325 1110,302 1140,283 1170,258 1200,225 1215,190 1228,145 1236,127 1242,122 1250,132 1262,185 1272,260 1285,330 1297,362 1310,370 1325,352 1345,300 1370,240 1385,180 1395,115 1400,95 1405,92 1412,110 1425,170 1440,235 1465,295 1490,338 1510,350 1535,342 1560,310 1590,265 1615,205 1630,150 1642,112 1648,107 1655,118 1668,170 1690,245 1715,310 1735,370 1748,415 1757,429 1768,420 1785,365 1805,325 1830,295 1860,270 1900,232 1920,200 1940,145 1950,112 1955,110 1963,125 1980,180 2000,225 2025,253 2050,266 2065,269"]}
              nodes={[
                { n: "1", x: 1040, y: 370 }, { n: "2", x: 1250, y: 154 }, { n: "3", x: 1308, y: 364 }, { n: "4", x: 1507, y: 328 },
                { n: "5", x: 1747, y: 368 }, { n: "6", x: 1939, y: 181 }, { n: "7", x: 1642, y: 157 }, { n: "8", x: 1407, y: 143, full: true },
              ]}
              bands={bells} onCount={8} plain={7} mode="M/S" edit="S" editOn scale="169 %" fill={93} out="-3.19 dB" outFill={37}
            />
            <Meter />
            <Delay />
            <Meter />
            <Utility inv sel="Swap" ms={["0", 0]} hz="343 Hz" fill={85} gain={["6.11 dB", 24]} />
            <Meter />
            <EqEight
              freq={["639 Hz", 10]} gain={["8.80 dB", 90]} q={["0.71", -35]} color={C.cyan} sx={2.521} ox={144}
              curves={[
                "413,472 428,430 455,350 480,270 500,190 512,158 525,152 540,160 555,172 562,172 568,130 572,60",
                "575,60 578,140 584,175 592,179 605,172 620,150 632,110 642,66",
                "669,66 678,100 692,132 708,143 720,140 735,136 746,148 760,200 780,270 800,340 825,410 845,472",
              ]}
              nodes={[{ n: "1", x: 428, y: 452 }, { n: "2", x: 573, y: 194 }, { n: "3", x: 651, y: 163, full: true }, { n: "4", x: 831, y: 452 }]}
              bands={["lowShelf", "bell", "bell", "highShelf", "bell", "bell", "bell", "cut"]} onCount={4} plain={2}
              mode="Stereo" edit="A" editOn={false} scale="184 %" fill={94} out="-12.0 dB" outFill={0}
            />
            <Meter />
            <Utility inv={false} sel="Stereo" ms={["52S", 78]} hz="248 Hz" fill={70} gain={["7.22 dB", 26]} />
          </Chain>
        </Strip>
      </Bottom>
    </Page>
  );
}
